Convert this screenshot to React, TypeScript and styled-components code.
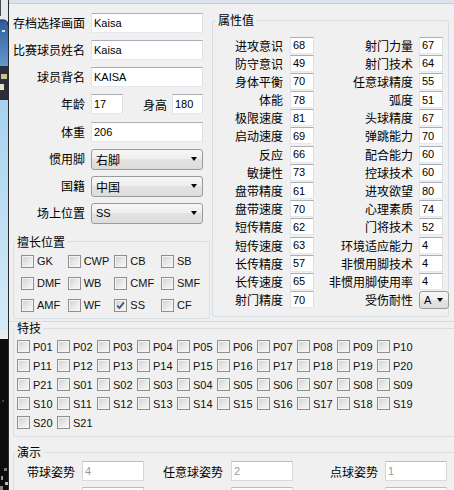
import { Fragment } from 'react';
import styled, { createGlobalStyle } from 'styled-components';

const latin = `"Liberation Sans", Arial, sans-serif`;
const cjk = `"Noto Sans CJK SC", "Liberation Sans", sans-serif`;

const GlobalStyle = createGlobalStyle`
  html, body {
    margin: 0;
    padding: 0;
    background: #f0f0f0;
  }
  #root {
    width: 454px;
    height: 490px;
    overflow: hidden;
  }
`;

const Window = styled.div`
  display: flex;
  width: 454px;
  height: 490px;
  overflow: hidden;
  background: #f0f0f0;
  font-family: ${cjk};
  font-size: 12px;
  color: #000;
`;

const Strip = styled.div`
  width: 8px;
  flex: none;
  border-right: 1px solid #2b2b2b;
  svg {
    display: block;
  }
`;

const Main = styled.div`
  flex: 1;
  min-width: 0;
  display: flex;
  flex-direction: column;
`;

const TopBand = styled.div`
  height: 3px;
  flex: none;
  background: #dce3ef;
  border-bottom: 1px solid #c4ccd9;
`;

const Upper = styled.div`
  display: flex;
  height: 317px;
  flex: none;
  border-bottom: 1px solid #dadada;
`;

const LeftCol = styled.div`
  width: 203px;
  flex: none;
  display: flex;
  flex-direction: column;
`;

const Form = styled.div`
  display: grid;
  grid-template-columns: 76px 112px;
  grid-auto-rows: 20px;
  column-gap: 6px;
  row-gap: 7.15px;
  padding-top: 9px;
`;

const Label = styled.span`
  text-align: right;
  line-height: 20px;
  white-space: nowrap;
`;

const Pair = styled.div`
  display: flex;
  align-items: center;
`;

const PairLabel = styled.span`
  flex: 1;
  text-align: right;
  padding-right: 5px;
  white-space: nowrap;
`;

const Field = styled.input<{ $w?: number; $off?: boolean }>`
  width: ${(p) => (p.$w ? `${p.$w}px` : '100%')};
  height: 100%;
  box-sizing: border-box;
  margin: 0;
  padding: 0 0 0 2px;
  border: 1px solid;
  border-color: ${(p) =>
    p.$off ? '#b9bcc0 #d4d6d9 #d9dbde #d4d6d9' : '#abadb3 #dbdfe6 #e3e9ef #e2e3ea'};
  border-radius: 0;
  background: #fff;
  outline: none;
  font-family: ${latin};
  font-size: 11px;
  color: ${(p) => (p.$off ? '#9a9a9a' : '#000')};
  flex: none;
`;

const Combo = styled.div<{ $w?: number; $h?: number }>`
  width: ${(p) => (p.$w ? `${p.$w}px` : '100%')};
  height: ${(p) => p.$h ?? 21}px;
  box-sizing: border-box;
  display: flex;
  align-items: center;
  justify-content: space-between;
  padding: 0 5px 0 4px;
  border: 1px solid #9a9a9a;
  border-radius: 3px;
  background: linear-gradient(#f6f6f6, #eeeeee 50%, #e3e3e3 50%, #dcdcdc);
  font-family: ${cjk};
  font-size: 12px;
  flex: none;
`;

const ComboText = styled.span<{ $latin?: boolean }>`
  font-family: ${(p) => (p.$latin ? latin : cjk)};
  font-size: ${(p) => (p.$latin ? 11 : 12)}px;
`;

const Arrow = styled.span`
  width: 0;
  height: 0;
  border-left: 3.5px solid transparent;
  border-right: 3.5px solid transparent;
  border-top: 4px solid #000;
`;

const Group = styled.fieldset<{ $w: number }>`
  margin: 0;
  padding: 0;
  width: ${(p) => p.$w}px;
  min-width: 0;
  box-sizing: border-box;
  border: 1px solid #d5dfe5;
  border-radius: 3px;
  flex: none;
`;

const GroupTitle = styled.legend<{ $ml?: number }>`
  padding: 0 2px;
  margin-left: ${(p) => p.$ml ?? 1}px;
  font-size: 12px;
  line-height: 12px;
`;

const PosGroup = styled(Group)`
  margin: 13px 0 0 4px;
  height: 83px;
`;

const AttrGroup = styled(Group)`
  margin-top: 10px;
  height: 303px;
`;

const SkillGroup = styled(Group)`
  margin: 0 0 0 4px;
  padding-bottom: 7px;
`;

const DemoGroup = styled(Group)`
  margin: 9px 0 0 4px;
  height: 80px;
`;

const CheckGrid = styled.div<{ $cols: number; $pitch: number; $gap: number; $pl: number; $pt: number }>`
  display: grid;
  grid-template-columns: repeat(${(p) => p.$cols}, ${(p) => p.$pitch}px);
  grid-auto-rows: 13px;
  row-gap: ${(p) => p.$gap}px;
  padding: ${(p) => p.$pt}px 0 0 ${(p) => p.$pl}px;
`;

const Check = styled.label`
  display: flex;
  align-items: center;
  gap: 3px;
  font-family: ${latin};
  font-size: 11px;
  white-space: nowrap;
  color: #111;
`;

const Box = styled.span`
  width: 11px;
  height: 11px;
  flex: none;
  display: flex;
  align-items: center;
  justify-content: center;
  border: 1px solid #8e8f8f;
  background: linear-gradient(135deg, #cfcfcf 0%, #e9e9e9 55%, #f9f9f9 100%);
  box-shadow: inset 0 0 0 1px #f4f4f4;
`;

const AttrGrid = styled.div`
  display: grid;
  grid-template-columns: 77px 24px 105px 24px;
  grid-auto-rows: 17px;
  row-gap: 1.2px;
  padding-top: 10.5px;
`;

const AttrLabel = styled.span<{ $pr: number }>`
  text-align: right;
  padding-right: ${(p) => p.$pr}px;
  line-height: 17px;
  white-space: nowrap;
`;

const DemoGrid = styled.div`
  display: grid;
  grid-template-columns: 130px 149px 154px;
  grid-auto-rows: 20px;
  row-gap: 6px;
  padding-top: 3px;
`;

const DemoCell = styled.div<{ $gap: number }>`
  display: flex;
  align-items: center;
  justify-content: flex-end;
  gap: ${(p) => p.$gap}px;
`;

function Slice() {
  return (
    <svg width="8" height="490" viewBox="0 0 8 490">
      <defs>
        <linearGradient id="sea" x1="0" y1="0" x2="0" y2="1">
          <stop offset="0" stopColor="#2d5b98" />
          <stop offset="1" stopColor="#6597cf" />
        </linearGradient>
        <linearGradient id="sky" x1="0" y1="0" x2="0" y2="1">
          <stop offset="0" stopColor="#a7d2ee" />
          <stop offset="1" stopColor="#d4ebf8" />
        </linearGradient>
      </defs>
      <rect width="8" height="22" fill="#e4e8f0" />
      <rect width="1" height="16" fill="#4a4a4a" />
      <path d="M0 20 H3 Q8 20 8 25 V66 H0 Z" fill="url(#sea)" />
      <path d="M0 20 H3 Q8 20 8 25" fill="none" stroke="#223" strokeWidth="1" />
      <rect x="2" y="30" width="3" height="2" fill="#d8e6f5" />
      <rect y="66" width="8" height="34" fill="#2b3038" />
      <rect x="1" y="74" width="6" height="5" fill="#cdbf98" />
      <rect x="0" y="84" width="4" height="6" fill="#e7e0cf" />
      <rect y="100" width="8" height="230" fill="url(#sky)" />
      <rect y="330" width="8" height="9" fill="#e9edf0" />
      <rect y="339" width="8" height="151" fill="#0d0d0d" />
      <rect x="2" y="400" width="2" height="2" fill="#444" />
      <rect x="4" y="468" width="3" height="3" fill="#777" />
      <rect x="1" y="476" width="2" height="4" fill="#999" />
      <rect x="5" y="482" width="3" height="3" fill="#bbb" />
      <rect x="0" y="486" width="3" height="4" fill="#888" />
    </svg>
  );
}

function Tick() {
  return (
    <svg width="9" height="9" viewBox="0 0 9 9">
      <path d="M1.2 4.6 L3.5 7 L7.9 1.4" fill="none" stroke="#3b4f7d" strokeWidth="1.7" />
    </svg>
  );
}

const positions = ['GK', 'CWP', 'CB', 'SB', 'DMF', 'WB', 'CMF', 'SMF', 'AMF', 'WF', 'SS', 'CF'];

const skills = [
  ...Array.from({ length: 21 }, (_, i) => `P${String(i + 1).padStart(2, '0')}`),
  ...Array.from({ length: 21 }, (_, i) => `S${String(i + 1).padStart(2, '0')}`),
];

const attrs: [string, string, string, string][] = [
  ['进攻意识', '68', '射门力量', '67'],
  ['防守意识', '49', '射门技术', '64'],
  ['身体平衡', '70', '任意球精度', '55'],
  ['体能', '78', '弧度', '51'],
  ['极限速度', '81', '头球精度', '67'],
  ['启动速度', '69', '弹跳能力', '70'],
  ['反应', '66', '配合能力', '60'],
  ['敏捷性', '73', '控球技术', '60'],
  ['盘带精度', '61', '进攻欲望', '80'],
  ['盘带速度', '70', '心理素质', '74'],
  ['短传精度', '62', '门将技术', '52'],
  ['短传速度', '63', '环境适应能力', '4'],
  ['长传精度', '57', '非惯用脚技术', '4'],
  ['长传速度', '65', '非惯用脚使用率', '4'],
  ['射门精度', '70', '受伤耐性', ''],
];

function CheckItem({ text, on }: { text: string; on?: boolean }) {
  return (
    <Check>
      <Box>{on && <Tick />}</Box>
      {text}
    </Check>
  );
}

export default function App() {
  return (
    <Window>
      <GlobalStyle />
      <Strip>
        <Slice />
      </Strip>
      <Main>
        <TopBand />
        <Upper>
          <LeftCol>
            <Form>
              <Label>存档选择画面</Label>
              <Field readOnly value="Kaisa" />
              <Label>比赛球员姓名</Label>
              <Field readOnly value="Kaisa" />
              <Label>球员背名</Label>
              <Field readOnly value="KAISA" />
              <Label>年龄</Label>
              <Pair>
                <Field readOnly value="17" $w={32} />
                <PairLabel>身高</PairLabel>
                <Field readOnly value="180" $w={31} />
              </Pair>
              <Label>体重</Label>
              <Field readOnly value="206" />
              <Label>惯用脚</Label>
              <Combo>
                <ComboText>右脚</ComboText>
                <Arrow />
              </Combo>
              <Label>国籍</Label>
              <Combo>
                <ComboText>中国</ComboText>
                <Arrow />
              </Combo>
              <Label>场上位置</Label>
              <Combo>
                <ComboText $latin>SS</ComboText>
                <Arrow />
              </Combo>
            </Form>
            <PosGroup $w={197}>
              <GroupTitle>擅长位置</GroupTitle>
              <CheckGrid $cols={4} $pitch={46.67} $gap={9} $pl={7} $pt={7}>
                {positions.map((p) => (
                  <CheckItem key={p} text={p} on={p === 'SS'} />
                ))}
              </CheckGrid>
            </PosGroup>
          </LeftCol>
          <AttrGroup $w={237}>
            <GroupTitle $ml={3}>属性值</GroupTitle>
            <AttrGrid>
              {attrs.map(([l1, v1, l2, v2]) => (
                <Fragment key={l1}>
                  <AttrLabel $pr={7}>{l1}</AttrLabel>
                  <Field readOnly value={v1} />
                  <AttrLabel $pr={6}>{l2}</AttrLabel>
                  {l2 === '受伤耐性' ? (
                    <Combo $w={30} $h={18}>
                      <ComboText $latin>A</ComboText>
                      <Arrow />
                    </Combo>
                  ) : (
                    <Field readOnly value={v2} />
                  )}
                </Fragment>
              ))}
            </AttrGrid>
          </AttrGroup>
        </Upper>
        <SkillGroup $w={470}>
          <GroupTitle>特技</GroupTitle>
          <CheckGrid $cols={10} $pitch={40} $gap={6} $pl={3} $pt={6}>
            {skills.map((s) => (
              <CheckItem key={s} text={s} />
            ))}
          </CheckGrid>
        </SkillGroup>
        <DemoGroup $w={470}>
          <GroupTitle>演示</GroupTitle>
          <DemoGrid>
            <DemoCell $gap={7}>
              <span>带球姿势</span>
              <Field readOnly value="4" $w={62} $off />
            </DemoCell>
            <DemoCell $gap={8}>
              <span>任意球姿势</span>
              <Field readOnly value="2" $w={62} $off />
            </DemoCell>
            <DemoCell $gap={7}>
              <span>点球姿势</span>
              <Field readOnly value="1" $w={62} $off />
            </DemoCell>
            <DemoCell $gap={7}>
              <Field readOnly value="" $w={62} $off />
            </DemoCell>
            <DemoCell $gap={8}>
              <Field readOnly value="" $w={62} $off />
            </DemoCell>
            <DemoCell $gap={7}>
              <Field readOnly value="" $w={62} $off />
            </DemoCell>
          </DemoGrid>
        </DemoGroup>
      </Main>
    </Window>
  );
}
